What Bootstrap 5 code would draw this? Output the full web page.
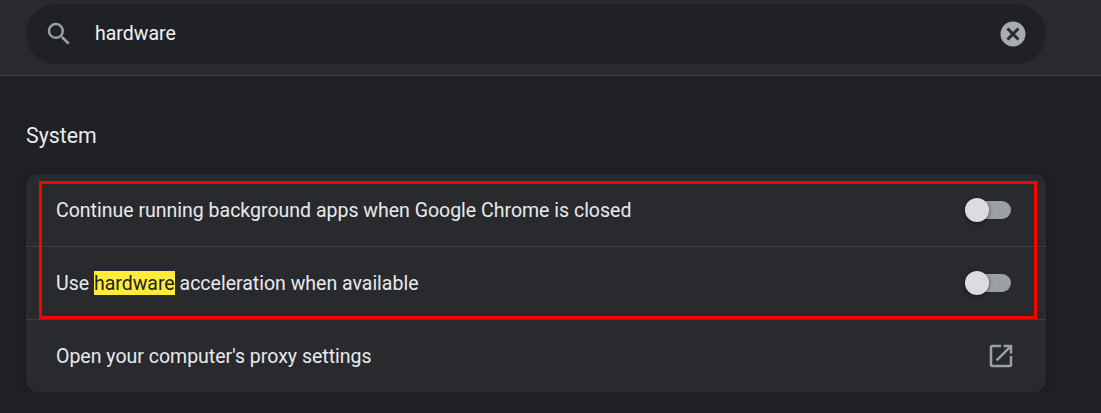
<!DOCTYPE html>
<html lang="en">
<head>
    <meta charset="UTF-8">
    <title>Settings</title>
    <link href="https://cdn.jsdelivr.net/npm/bootstrap@5.3.0/dist/css/bootstrap.min.css" rel="stylesheet">
    <style>
        body {
            background: #202124;
            font-family: Roboto, "Liberation Sans", sans-serif;
            color: #e8eaed;
            overflow: hidden;
        }
        .top-bar {
            background: #292a2d;
            height: 76px;
            padding: 4px 55px 0 26px;
            border-bottom: 1px solid #3f4043;
        }
        .search-pill {
            background: #202124;
            height: 60px;
            border-radius: 30px;
            padding: 0 20px 0 18px;
        }
        .search-text {
            font-size: 19.5px;
            margin-left: 21px;
            color: #f1f3f4;
        }
        .section-title {
            font-size: 21.3px;
            font-weight: 400;
            line-height: 24px;
            margin: 48px 0 26px 26px;
        }
        .settings-card {
            position: relative;
            background: #292a2d;
            width: 1020px;
            margin-left: 26px;
            border-radius: 12px;
            box-shadow: 0 2px 8px rgba(0, 0, 0, .3);
        }
        .setting-row {
            height: 73px;
            padding: 0 30px;
            font-size: 19.5px;
            border-bottom: 1px solid #3f4043;
        }
        .setting-row:last-child {
            height: 72px;
            border-bottom: 0;
        }
        .row-label {
            padding-top: 2px;
        }
        .hit {
            background: #ffeb3b;
            color: #202124;
            padding: 1px 0 0;
        }
        .fake-toggle {
            position: relative;
            width: 46px;
            height: 18px;
            margin-right: 5px;
            border-radius: 9px;
            background: #9aa0a6;
        }
        .fake-toggle::before {
            content: "";
            position: absolute;
            left: 0;
            top: -3px;
            width: 24px;
            height: 24px;
            border-radius: 50%;
            background: #dadce0;
            box-shadow: 0 1px 4px rgba(0, 0, 0, .5);
        }
        .red-outline {
            position: absolute;
            left: 13px;
            top: 7px;
            width: 998px;
            height: 138px;
            border: 3px solid #ff0000;
            pointer-events: none;
        }
    </style>
</head>
<body>
    <div class="top-bar">
        <div class="search-pill d-flex align-items-center">
            <svg width="30" height="30" viewBox="0 0 24 24" fill="#9aa0a6"><path d="M15.5 14h-.79l-.28-.27A6.47 6.47 0 0 0 16 9.5 6.5 6.5 0 1 0 9.5 16c1.61 0 3.09-.59 4.23-1.57l.27.28v.79l5 4.99L20.49 19l-4.99-5zm-6 0C7.01 14 5 11.99 5 9.5S7.01 5 9.5 5 14 7.01 14 9.5 11.99 14 9.5 14z"/></svg>
            <span class="search-text flex-grow-1">hardware</span>
            <svg width="26" height="26" viewBox="0 0 26 26">
                <circle cx="13" cy="13" r="12.5" fill="#a8abb2"/>
                <path d="M7.5 7.5l11 11M18.5 7.5l-11 11" stroke="#292a2d" stroke-width="3" fill="none"/>
            </svg>
        </div>
    </div>

    <h2 class="section-title">System</h2>

    <div class="settings-card">
        <div class="red-outline"></div>
        <div class="setting-row d-flex align-items-center justify-content-between">
            <span class="row-label">Continue running background apps when Google Chrome is closed</span>
            <div class="fake-toggle"></div>
        </div>
        <div class="setting-row d-flex align-items-center justify-content-between">
            <span class="row-label">Use <mark class="hit">hardware</mark> acceleration when available</span>
            <div class="fake-toggle"></div>
        </div>
        <div class="setting-row d-flex align-items-center justify-content-between">
            <span class="row-label">Open your computer's proxy settings</span>
            <svg width="30" height="30" viewBox="0 0 24 24" fill="#9aa0a6"><path d="M19 19H5V5h7V3H5a2 2 0 0 0-2 2v14a2 2 0 0 0 2 2h14c1.1 0 2-.9 2-2v-7h-2v7zM14 3v2h3.59l-9.83 9.83 1.41 1.41L19 6.41V10h2V3h-7z"/></svg>
        </div>
    </div>

    <script src="https://cdn.jsdelivr.net/npm/bootstrap@5.3.0/dist/js/bootstrap.bundle.min.js"></script>
</body>
</html>
